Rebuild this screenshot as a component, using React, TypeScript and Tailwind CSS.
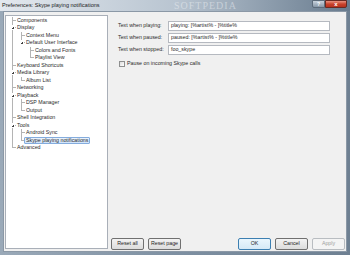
import React from 'react';

type Node = {
  label: string;
  level: number;
  last?: boolean;
  expanded?: boolean;
  selected?: boolean;
  // which ancestor levels still have a vertical line running through this row
  anc: boolean[];
};

const tree: Node[] = [
  { label: 'Components', level: 0, anc: [] },
  { label: 'Display', level: 0, expanded: true, anc: [] },
  { label: 'Context Menu', level: 1, anc: [true] },
  { label: 'Default User Interface', level: 1, last: true, expanded: true, anc: [true] },
  { label: 'Colors and Fonts', level: 2, anc: [true, false] },
  { label: 'Playlist View', level: 2, last: true, anc: [true, false] },
  { label: 'Keyboard Shortcuts', level: 0, anc: [] },
  { label: 'Media Library', level: 0, expanded: true, anc: [] },
  { label: 'Album List', level: 1, last: true, anc: [true] },
  { label: 'Networking', level: 0, anc: [] },
  { label: 'Playback', level: 0, expanded: true, anc: [] },
  { label: 'DSP Manager', level: 1, anc: [true] },
  { label: 'Output', level: 1, last: true, anc: [true] },
  { label: 'Shell Integration', level: 0, anc: [] },
  { label: 'Tools', level: 0, expanded: true, anc: [] },
  { label: 'Android Sync', level: 1, anc: [true] },
  { label: 'Skype playing notifications', level: 1, last: true, selected: true, anc: [true] },
  { label: 'Advanced', level: 0, last: true, anc: [] },
];

const ROW = 7.5;
const LINE = '#b4b4b4';

function TreeGutter({ node }: { node: Node }) {
  const w = 10 + node.level * 9;
  const x = 6.5 + node.level * 9;
  const mid = ROW / 2;
  return (
    <svg width={w} height={ROW} className="shrink-0" shapeRendering="crispEdges">
      {node.anc.map((on, i) =>
        on ? <line key={i} x1={6.5 + i * 9} y1={0} x2={6.5 + i * 9} y2={ROW} stroke={LINE} strokeWidth={1} /> : null
      )}
      <line x1={x} y1={0} x2={x} y2={node.last ? mid : ROW} stroke={LINE} strokeWidth={1} />
      <line x1={x} y1={mid} x2={x + 4} y2={mid} stroke={LINE} strokeWidth={1} />
      {node.expanded && (
        <>
          <rect x={x - 2.5} y={mid - 2.5} width={5} height={5} fill="#ffffff" />
          <polygon points={`${x + 1.6},${mid - 1.6} ${x + 1.6},${mid + 1.6} ${x - 1.6},${mid + 1.6}`} fill="#404040" />
        </>
      )}
    </svg>
  );
}

function Btn({ children, variant }: { children: React.ReactNode; variant?: 'default' | 'disabled' }) {
  const cls =
    variant === 'default'
      ? 'border-[#3c7fb1] bg-gradient-to-b from-[#eaf6fd] to-[#d5e9f6] text-[#1e1e1e]'
      : variant === 'disabled'
      ? 'border-[#b9bdc1] bg-[#f4f4f4] text-[#a0a0a0]'
      : 'border-[#707070] bg-gradient-to-b from-[#f3f3f3] to-[#dcdcdc] text-[#1e1e1e]';
  return (
    <div className={`w-[33px] h-[12px] rounded-[2px] border flex items-center justify-center text-[5.3px] leading-none ${cls}`}>
      {children}
    </div>
  );
}

function Field({ label, value }: { label: string; value: string }) {
  return (
    <div className="flex items-center h-[10px]">
      <div className="w-[50px] text-[5.3px] leading-none text-[#2a2a2a]">{label}</div>
      <div className="w-[162px] h-[10px] bg-white border border-[#b5b9c0] flex items-center pl-[2px] text-[5.3px] leading-none text-[#2a2a2a]">
        {value}
      </div>
    </div>
  );
}

export default function App() {
  return (
    <div
      className="w-[350px] h-[255px] flex flex-col overflow-hidden bg-gradient-to-r from-[#9aa9b8] via-[#7e90a2] to-[#6e8092]"
      style={{ fontFamily: '"Liberation Sans", Arial, sans-serif' }}
    >
      {/* Title bar */}
      <div className="relative h-[11px] shrink-0 flex items-center overflow-hidden bg-gradient-to-r from-[#e3e8ee] via-[#b9c5d1] to-[#687b8e]">
        <span className="pl-[2px] text-[5.5px] leading-none text-[#1b1b1b]">Preferences: Skype playing notifications</span>
        <span
          className="absolute left-[174px] top-[1px] text-[10px] leading-none tracking-[1px] text-white/40"
          style={{ fontFamily: '"Liberation Serif", serif' }}
        >
          SOFTPEDIA
        </span>
        <div className="absolute right-[25px] top-0 w-[13px] h-[8px] rounded-bl-[2px] border border-[#5c6b7a] bg-gradient-to-b from-[#c9d3dd] to-[#8797a7] flex items-center justify-center text-[5px] leading-none text-white font-bold">
          ?
        </div>
        <div className="absolute right-[3px] top-0 w-[22px] h-[8px] rounded-br-[2px] border border-[#6a2a22] bg-gradient-to-b from-[#e8917f] via-[#c9422c] to-[#b7321e] flex items-center justify-center text-[6px] leading-none text-white font-bold">
          x
        </div>
      </div>

      {/* Client area */}
      <div className="mx-[3px] h-[241px] bg-[#f0f0f0] flex border border-[#8b98a6]">
        {/* Tree */}
        <div className="ml-[1px] mt-[3px] w-[103px] h-[234px] bg-white border border-[#a9afb8] pt-[0.5px]">
          {tree.map(n => (
            <div key={n.label} className="flex items-center h-[7.5px]">
              <TreeGutter node={n} />
              <span
                className={`text-[5.3px] leading-none whitespace-nowrap px-[1px] h-[7px] flex items-center ${
                  n.selected ? 'border border-[#84acdd] rounded-[1px] bg-gradient-to-b from-[#eaf3fd] to-[#cfe3fb] -ml-[1px]' : ''
                } text-[#2a2a2a]`}
              >
                {n.label}
              </span>
            </div>
          ))}
        </div>

        {/* Page */}
        <div className="flex-1 flex flex-col">
          <div className="pl-[10px] pt-[9px] flex flex-col gap-[2px]">
            <Field label="Text when playing:" value="playing: [%artist% - ]%title%" />
            <Field label="Text when paused:" value="paused: [%artist% - ]%title%" />
            <Field label="Text when stopped:" value="foo_skype" />
            <div className="flex items-center mt-[3px] h-[8px]">
              <div className="ml-[1px] w-[6px] h-[6px] border border-[#8e8f8f] bg-gradient-to-br from-[#dcdcdc] to-[#ffffff]" />
              <span className="ml-[2px] text-[5.3px] leading-none text-[#2a2a2a]">Pause on incoming Skype calls</span>
            </div>
          </div>

          <div className="mt-auto mb-[1px] flex items-center pl-[3px] pr-[1px]">
            <div className="flex gap-[4px]">
              <Btn>Reset all</Btn>
              <Btn>Reset page</Btn>
            </div>
            <div className="ml-auto flex gap-[4px]">
              <Btn variant="default">OK</Btn>
              <Btn>Cancel</Btn>
              <Btn variant="disabled">Apply</Btn>
            </div>
          </div>
        </div>
      </div>
    </div>
  );
}
